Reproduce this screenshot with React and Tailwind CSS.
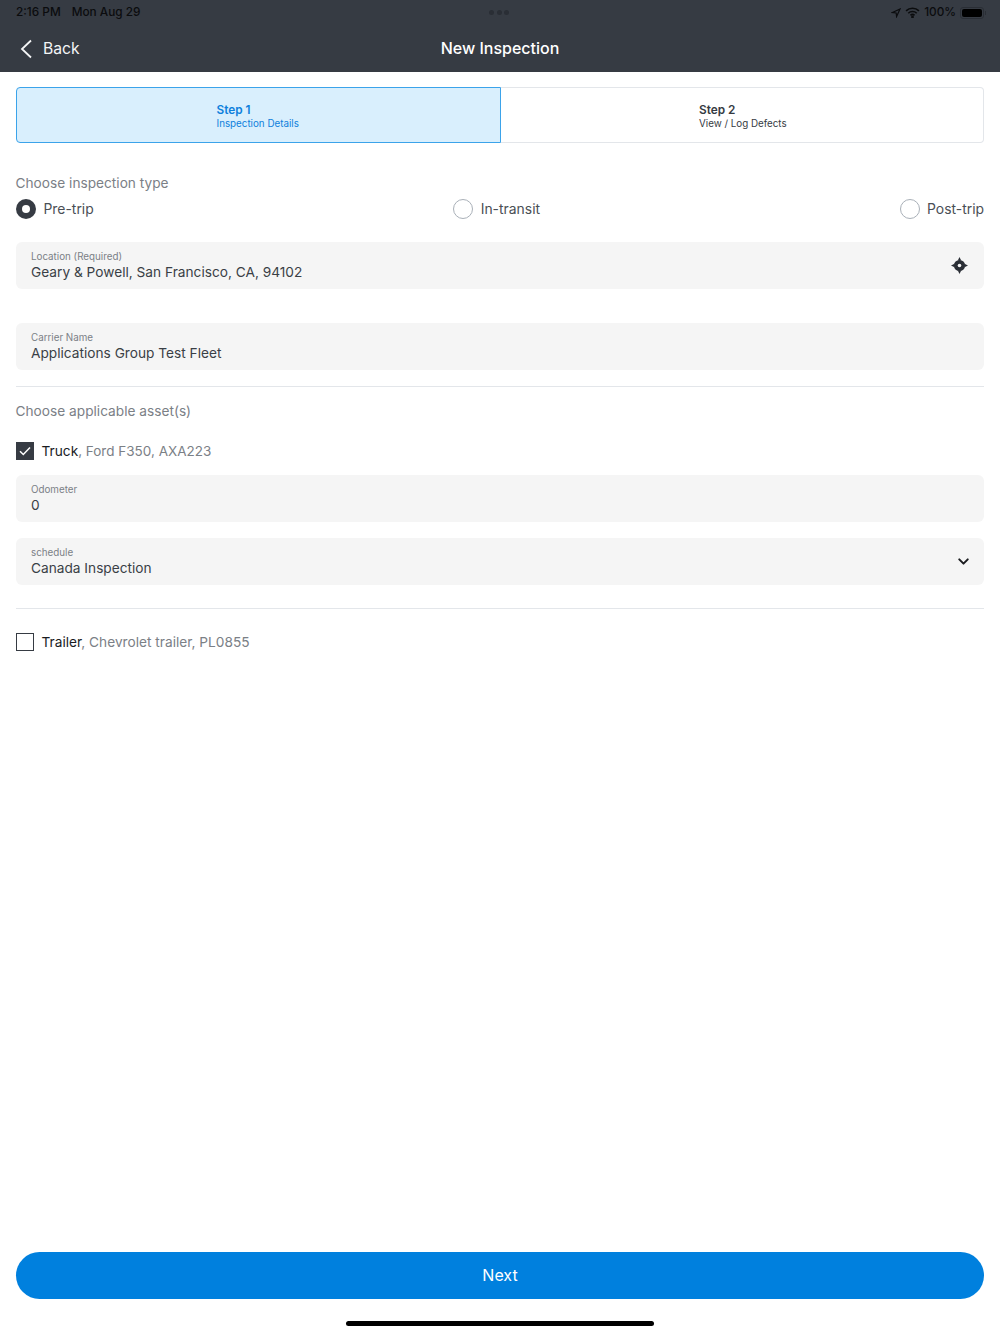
import { ChevronDown } from "lucide-react";

const Field = ({ label, value, right, className = "" }) => (
  <div className={`flex h-[47px] items-center justify-between rounded-[6px] bg-[#f5f5f5] pl-[15px] ${className}`}>
    <div>
      <div className="text-[9.8px] leading-[14px] text-[#7b8086]">{label}</div>
      <div className="text-[13.7px] leading-[17px] text-[#3a3f46]">{value}</div>
    </div>
    {right}
  </div>
);

const Radio = ({ label, checked }) => (
  <div className="flex items-center gap-[7.5px]">
    {checked ? (
      <div className="flex h-[20px] w-[20px] items-center justify-center rounded-full bg-[#363b43]">
        <div className="h-[8px] w-[8px] rounded-full bg-white" />
      </div>
    ) : (
      <div className="h-[20px] w-[20px] rounded-full border border-[#a9b0b8] bg-white" />
    )}
    <span className="text-[13.9px] text-[#4a4f56]">{label}</span>
  </div>
);

export default function App() {
  return (
    <div className="flex h-[1334px] w-[1000px] flex-col bg-white font-['Inter',sans-serif]">
      {/* Header */}
      <div className="h-[72px] shrink-0 bg-[#363b43]">
        <div className="relative flex h-[24px] items-center justify-between pl-[16px] pr-[14px] pt-[1px] text-[11.8px] font-medium text-[#0b0c0e]">
          <div className="flex gap-[11px]">
            <span>2:16 PM</span>
            <span>Mon Aug 29</span>
          </div>
          <div className="absolute left-[489px] top-[10px] flex gap-[2.5px]">
            <div className="h-[5px] w-[5px] rounded-full bg-[#2a2e35]" />
            <div className="h-[5px] w-[5px] rounded-full bg-[#2a2e35]" />
            <div className="h-[5px] w-[5px] rounded-full bg-[#2a2e35]" />
          </div>
          <div className="flex items-center gap-[4px]">
            <svg width="10" height="10" viewBox="0 0 12 12" fill="none" stroke="#0b0c0e" strokeWidth="1.4">
              <path d="M10.8 1.2 1.8 5.4l4.4.5.5 4.4z" />
            </svg>
            <svg width="15" height="11" viewBox="0 0 16 12" fill="none" stroke="#0b0c0e" strokeWidth="1.8">
              <path d="M1 4.2a10 10 0 0 1 14 0" />
              <path d="M3.4 6.8a6.6 6.6 0 0 1 9.2 0" />
              <path d="M5.8 9.2a3.2 3.2 0 0 1 4.4 0" />
              <circle cx="8" cy="10.8" r=".6" fill="#0b0c0e" />
            </svg>
            <span>100%</span>
            <div className="flex items-center">
              <div className="h-[12px] w-[24px] rounded-[3px] border border-[#2a2e35] p-[1px]">
                <div className="h-full w-full rounded-[2px] bg-black" />
              </div>
              <div className="ml-[1px] h-[4px] w-[1px] bg-[#2a2e35]" />
            </div>
          </div>
        </div>
        <div className="relative flex h-[48px] items-center justify-center">
          <div className="absolute left-[20px] top-[14px] flex items-center gap-[11px]">
            <svg width="12" height="20" viewBox="0 0 12 20" fill="none" stroke="#f4f5f6" strokeWidth="1.8">
              <path d="M11 1.5 2 10l9 8.5" />
            </svg>
            <span className="pt-[1px] text-[15.7px] leading-[20px] text-[#f4f5f6]">Back</span>
          </div>
          <span className="text-[16px] font-medium text-white">New Inspection</span>
        </div>
      </div>

      {/* Body */}
      <div className="flex flex-1 flex-col px-[16px]">
        <div className="mt-[15px] flex h-[56px] rounded-[4px]">
          <div className="w-[485px] rounded-l-[4px] border border-[#3ba3ea] bg-[#d9effd] pl-[199.5px] pt-[15px] text-[#0e80dc]">
            <div className="text-[11.8px] font-semibold leading-[14px]">Step 1</div>
            <div className="text-[9.8px] leading-[13px]">Inspection Details</div>
          </div>
          <div className="flex-1 rounded-r-[4px] border border-l-0 border-[#e3e6ea] pl-[198px] pt-[15px] text-[#363b43]">
            <div className="text-[11.8px] font-semibold leading-[14px]">Step 2</div>
            <div className="text-[9.8px] leading-[13px]">View / Log Defects</div>
          </div>
        </div>

        <div className="mt-[31px] -ml-[0.5px] text-[13.7px] leading-[18px] text-[#7b8086]">Choose inspection type</div>
        <div className="mt-[7px] flex h-[20px] items-center justify-between">
          <Radio label="Pre-trip" checked />
          <Radio label="In-transit" />
          <Radio label="Post-trip" />
        </div>

        <Field
          className="mt-[23px] pr-[16px]"
          label="Location (Required)"
          value="Geary & Powell, San Francisco, CA, 94102"
          right={
            <svg width="17" height="17" viewBox="0 0 17 17" fill="#2a2e35">
              <circle cx="8.5" cy="8.5" r="5.6" />
              <path d="M8.5 0 10.2 3.5H6.8zM8.5 17 6.8 13.5H10.2zM0 8.5 3.5 6.8V10.2zM17 8.5 13.5 10.2V6.8z" />
              <circle cx="8.5" cy="8.5" r="1.8" fill="#f5f5f5" />
            </svg>
          }
        />
        <Field className="mt-[34px]" label="Carrier Name" value="Applications Group Test Fleet" />

        <div className="mt-[16px] h-px bg-[#e3e6ea]" />

        <div className="mt-[15px] -ml-[0.5px] text-[13.7px] leading-[18px] text-[#7b8086]">Choose applicable asset(s)</div>

        <div className="mt-[22px] flex h-[18px] items-center gap-[7.5px] text-[13.7px]">
          <div className="flex h-[18px] w-[18px] items-center justify-center bg-[#363b43]">
            <svg width="12" height="10" viewBox="0 0 12 10" fill="none" stroke="white" strokeWidth="1.5">
              <path d="M1 5.2 4.3 8.5 11 1.5" />
            </svg>
          </div>
          <div>
            <span className="text-[#1a1c1f]">Truck</span>
            <span className="text-[13.5px] text-[#7b8086]">, Ford F350, AXA223</span>
          </div>
        </div>

        <Field className="mt-[15px]" label="Odometer" value="0" />
        <Field
          className="mt-[16px] pr-[12px]"
          label="schedule"
          value="Canada Inspection"
          right={<ChevronDown size={17} strokeWidth={2.8} className="text-[#1a1c1f]" />}
        />

        <div className="mt-[23px] h-px bg-[#e3e6ea]" />

        <div className="mt-[24px] flex h-[18px] items-center gap-[7.5px] text-[13.7px]">
          <div className="h-[18px] w-[18px] border-[1.5px] border-[#363b43] bg-white" />
          <div>
            <span className="text-[#1a1c1f]">Trailer</span>
            <span className="text-[#7b8086]">, Chevrolet trailer, PL0855</span>
          </div>
        </div>

        {/* Footer */}
        <div className="mt-auto flex h-[47px] items-center justify-center rounded-full bg-[#0080de] pb-[1px] text-[16px] text-white">
          Next
        </div>
        <div className="mb-[8px] mt-[22px] flex justify-center">
          <div className="h-[5px] w-[308px] rounded-full bg-black" />
        </div>
      </div>
    </div>
  );
}
